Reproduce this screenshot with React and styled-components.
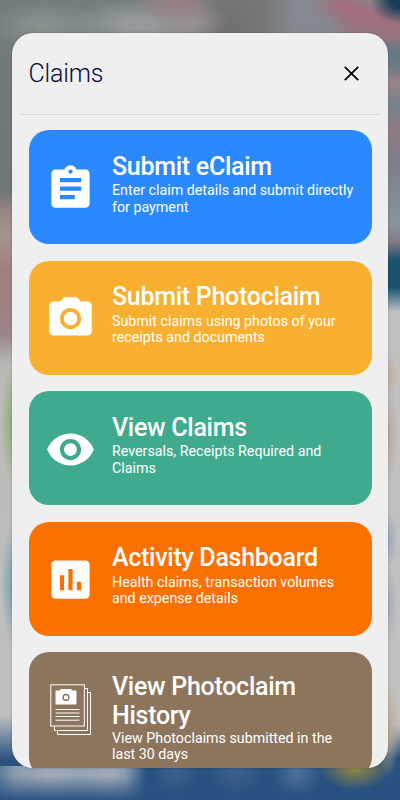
import React, { useState } from 'react';
import styled, { createGlobalStyle } from 'styled-components';
import {
  MdAssignment,
  MdCameraAlt,
  MdVisibility,
  MdAssessment,
} from 'react-icons/md';

const GlobalStyle = createGlobalStyle`
  * {
    box-sizing: border-box;
  }

  body {
    margin: 0;
    font-family: Roboto, "Liberation Sans", sans-serif;
  }
`;

// soft colour spots stand for the blurred page behind the dialog
const Backdrop = styled.div`
  display: flex;
  height: 800px;
  overflow: hidden;
  padding: 32.6px 12px 32px;
  background:
    radial-gradient(30px 24px at 400px 0, #183c55 30%, transparent),
    radial-gradient(34px 18px at 345px 6px, #a46d7d 10%, transparent),
    radial-gradient(34px 16px at 372px 17px, #a46d7d 10%, transparent),
    radial-gradient(30px 14px at 400px 30px, #a17080 10%, transparent),
    radial-gradient(45px 22px at 175px 2px, #9b8085, transparent),
    radial-gradient(40px 22px at 190px 22px, #9b9092, transparent),
    radial-gradient(75px 26px at 140px 24px, #959b9c 20%, transparent),
    radial-gradient(60px 24px at 45px 25px, #8b9393, transparent),
    radial-gradient(35px 35px at 225px 25px, #706d70, transparent),
    radial-gradient(45px 60px at 310px 20px, #86888f 40%, transparent),
    radial-gradient(50px 60px at 258px 20px, #777775 20%, transparent),
    radial-gradient(12px 60px at 13px 424px, #8fb07a 20%, transparent),
    radial-gradient(12px 60px at 13px 585px, #7fa4b3 20%, transparent),
    radial-gradient(10px 24px at 388px 376px, #c0a995, transparent),
    radial-gradient(10px 50px at 388px 435px, #b7a69a, transparent),
    radial-gradient(10px 30px at 388px 540px, #98a2b6, transparent),
    radial-gradient(10px 40px at 388px 605px, #a3a8b5, transparent),
    radial-gradient(36px 23px at 355px 767px, #9b8b3e, transparent),
    radial-gradient(12px 50px at 388px 728px, #bba990, transparent),
    radial-gradient(24px 22px at 175px 773px, #3c608a, transparent),
    radial-gradient(28px 22px at 236px 773px, #3d608b, transparent),
    radial-gradient(24px 24px at 297px 773px, #4f719a, transparent),
    linear-gradient(transparent, #2a5280f0 95%) 0 776px / 160px 24px no-repeat,
    linear-gradient(90deg, #5f7d9f, #8c9cae 15px, #9eaab6 50px, #93a3b3 80px, #9eaab6 112px, #8a9db1 125px, #2a528000 146px) 0 766px / 160px 34px no-repeat,
    linear-gradient(#848a90 0, #9a727e 20px, #8f7881 36px, #5f7888 54px, #6d7a86 66px, #99818b 82px, #77838c 105px, #917b87 132px, #7c7f8c 165px, #87939b 225px, #837987 242px, #1a526d 260px, #1a526d 287px, #bfc0c1 312px, #c1c1c1 725px, #2a5280 758px) 300px 0 / 100px 100% no-repeat,
    linear-gradient(#747c7d 0, #6f7677 190px, #998582 212px, #a3958e 235px, #a07e7a 270px, #9b8588 335px, #b9bab7 365px, #bfbfbf 715px, #2a5280 760px);
`;

const Dialog = styled.section`
  flex: 1;
  overflow: hidden;
  border-radius: 21px;
  background: #efefef;
  box-shadow: 0 0 2px rgba(0, 0, 0, 0.3);
`;

const Header = styled.header`
  display: flex;
  align-items: center;
  justify-content: space-between;
  height: 82px;
  margin: 0 8px;
  padding: 0 21.4px 0 8.5px;
  border-bottom: 1px solid #d9d9d9;
`;

const Heading = styled.h1`
  margin: 0;
  padding-top: 1.6px;
  color: #060b3d;
  font-size: 25px;
  font-weight: 300;
  letter-spacing: -0.15px;
  line-height: 30px;
`;

const CloseButton = styled.button`
  display: flex;
  padding: 0;
  border: 0;
  background: none;
  color: #000;
`;

const List = styled.div`
  display: flex;
  flex-direction: column;
  gap: 16.4px;
  padding: 15.8px 16.5px;
`;

const Title = styled.h2`
  margin: 0;
  font-size: 25px;
  font-weight: 500;
  letter-spacing: -0.28px;
  line-height: 29px;
`;

const Description = styled.p`
  margin: 0;
  font-size: 14.25px;
  line-height: 16.4px;
`;

const Card = styled.div`
  display: flex;
  flex-shrink: 0;
  height: ${(props) => (props.$tall ? 125 : 114)}px;
  padding: ${(props) => (props.$tall ? 20 : 21.5)}px 12px 0 16px;
  border-radius: 20px;
  background: ${(props) => props.$color};
  color: #fff;

  ${Description} {
    margin-top: ${(props) => (props.$tall ? 0 : 1.6)}px;
  }
`;

const IconBox = styled.div`
  display: flex;
  align-items: center;
  justify-content: center;
  width: 52px;
  height: ${(props) => (props.$tall ? 77 : 73)}px;
  margin-right: 15.5px;
`;

const Text = styled.div`
  flex: 1;
`;

function CloseIcon() {
  return (
    <svg width="15" height="15" viewBox="0 0 15 15" stroke="currentColor" strokeWidth="1.7">
      <path d="M.8.8l13.4 13.4M14.200.8L.8 14.200" />
    </svg>
  );
}

function HistoryIcon() {
  return (
    <svg width="42" height="52" viewBox="0 0 42 52" fill="none" stroke="#fff">
      <path d="M34 4.500h3.500v42H4.500V42" />
      <path d="M37.500 8.500h3v42H7.500V46.500" />
      <rect x=".8" y=".8" width="33.500" height="41.200" />
      <path
        fill="#fff"
        stroke="none"
        fillRule="evenodd"
        d="M6.500 6.500h3l1.500-1.500h10l1.500 1.500h3q1 0 1 1v12q0 1-1 1h-19q-1 0-1-1v-12q0-1 1-1zm9.500 3.300a3.600 3.600 0 1 0 0 7.200 3.600 3.600 0 0 0 0-7.200zm0 1.400a2.200 2.200 0 1 1 0 4.400 2.200 2.200 0 0 1 0-4.400z"
      />
      <path d="M5.500 25.500h24M5.500 29h24M5.500 32.500h24M5.500 36.200h24" />
    </svg>
  );
}

const claims = [
  {
    title: 'Submit eClaim',
    text: ['Enter claim details and submit directly', 'for payment'],
    color: '#2a89ff',
    Icon: MdAssignment,
  },
  {
    title: 'Submit Photoclaim',
    text: ['Submit claims using photos of your', 'receipts and documents'],
    color: '#f9b030',
    Icon: MdCameraAlt,
  },
  {
    title: 'View Claims',
    text: ['Reversals, Receipts Required and', 'Claims'],
    color: '#40aa8f',
    Icon: MdVisibility,
  },
  {
    title: 'Activity Dashboard',
    text: ['Health claims, transaction volumes', 'and expense details'],
    color: '#fc7000',
    Icon: MdAssessment,
  },
  {
    title: 'View Photoclaim History',
    text: ['View Photoclaims submitted in the', 'last 30 days'],
    color: '#8d755d',
    Icon: HistoryIcon,
    tall: true,
  },
];

function App() {
  const [open, setOpen] = useState(true);

  return (
    <>
      <GlobalStyle />
      <Backdrop>
        {open && (
          <Dialog>
            <Header>
              <Heading>Claims</Heading>
              <CloseButton aria-label="Close" onClick={() => setOpen(false)}>
                <CloseIcon />
              </CloseButton>
            </Header>
            <List>
              {claims.map(({ title, text, color, Icon, tall }) => (
                <Card key={title} $color={color} $tall={tall}>
                  <IconBox $tall={tall}>
                    <Icon size={51} />
                  </IconBox>
                  <Text>
                    <Title>{title}</Title>
                    <Description>
                      {text[0]}
                      <br />
                      {text[1]}
                    </Description>
                  </Text>
                </Card>
              ))}
            </List>
          </Dialog>
        )}
      </Backdrop>
    </>
  );
}

export default App;
